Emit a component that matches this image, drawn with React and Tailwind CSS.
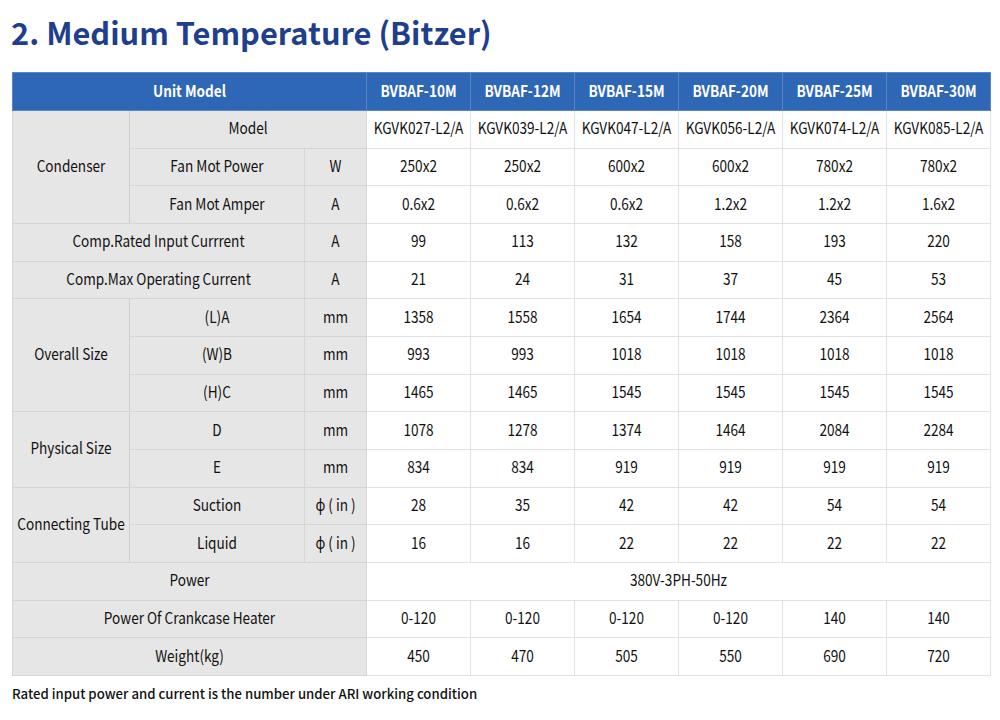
const models = ["BVBAF-10M", "BVBAF-12M", "BVBAF-15M", "BVBAF-20M", "BVBAF-25M", "BVBAF-30M"];

const rows = [
  { group: "Condenser", span: 3, label: "Model", unit: null, values: ["KGVK027-L2/A", "KGVK039-L2/A", "KGVK047-L2/A", "KGVK056-L2/A", "KGVK074-L2/A", "KGVK085-L2/A"] },
  { label: "Fan Mot Power", unit: "W", values: ["250x2", "250x2", "600x2", "600x2", "780x2", "780x2"] },
  { label: "Fan Mot Amper", unit: "A", values: ["0.6x2", "0.6x2", "0.6x2", "1.2x2", "1.2x2", "1.6x2"] },
  { wide: "Comp.Rated Input Currrent", unit: "A", values: ["99", "113", "132", "158", "193", "220"] },
  { wide: "Comp.Max Operating Current", unit: "A", values: ["21", "24", "31", "37", "45", "53"] },
  { group: "Overall Size", span: 3, label: "(L)A", unit: "mm", values: ["1358", "1558", "1654", "1744", "2364", "2564"] },
  { label: "(W)B", unit: "mm", values: ["993", "993", "1018", "1018", "1018", "1018"] },
  { label: "(H)C", unit: "mm", values: ["1465", "1465", "1545", "1545", "1545", "1545"] },
  { group: "Physical Size", span: 2, label: "D", unit: "mm", values: ["1078", "1278", "1374", "1464", "2084", "2284"] },
  { label: "E", unit: "mm", values: ["834", "834", "919", "919", "919", "919"] },
  { group: "Connecting Tube", span: 2, label: "Suction", unit: "ϕ ( in )", values: ["28", "35", "42", "42", "54", "54"] },
  { label: "Liquid", unit: "ϕ ( in )", values: ["16", "16", "22", "22", "22", "22"] },
  { full: "Power", merged: "380V-3PH-50Hz" },
  { full: "Power Of Crankcase Heater", values: ["0-120", "0-120", "0-120", "0-120", "140", "140"] },
  { full: "Weight(kg)", values: ["450", "470", "505", "550", "690", "720"] },
];

const lab = "bg-[#e7e6e6] border border-[#d6d6d6] text-center align-middle";
const val = "bg-white border border-[#e2e2e2] text-center align-middle";

// the reference type is narrow, so each cell text is squeezed a little
const T = ({ children }) => (
  <span className="block -mx-4 whitespace-nowrap scale-x-[0.85] -translate-y-[2px]">{children}</span>
);

export default function App() {
  return (
    <div className="w-[1000px] h-[720px] bg-white text-[#111] font-['Noto_Sans_CJK_SC','Noto_Sans',sans-serif]">
      <h1 className="pl-[11px] pt-[10px] h-[72px] text-[30.8px] font-bold leading-[44px] text-[#1f3f8c]">
        2. Medium Temperature (Bitzer)
      </h1>
      <table className="ml-[12px] w-[978px] table-fixed border-collapse text-[16px]">
        <colgroup>
          <col className="w-[117px]" />
          <col className="w-[175px]" />
          <col className="w-[62px]" />
          {models.map((m) => (
            <col key={m} className="w-[104px]" />
          ))}
        </colgroup>
        <thead>
          <tr className="h-[38px] bg-[#2f67b7] text-white text-[16px]">
            <th colSpan={3} className="border border-[#5a86c6] font-bold">
              <T>Unit Model</T>
            </th>
            {models.map((m) => (
              <th key={m} className="border border-[#5a86c6] font-bold">
                <T>{m}</T>
              </th>
            ))}
          </tr>
        </thead>
        <tbody>
          {rows.map((r, i) => (
            <tr key={i} className="h-[37.67px]">
              {r.group && (
                <td rowSpan={r.span} className={lab + " border-r-[#cfcfcf]"}>
                  <T>{r.group}</T>
                </td>
              )}
              {r.wide && (
                <td colSpan={2} className={lab}>
                  <T>{r.wide}</T>
                </td>
              )}
              {r.full && (
                <td colSpan={3} className={lab}>
                  <T>{r.full}</T>
                </td>
              )}
              {r.label && (
                <td colSpan={r.unit ? 1 : 2} className={lab}>
                  <T>{r.label}</T>
                </td>
              )}
              {r.unit && !r.full && (
                <td className={lab}>
                  <T>{r.unit}</T>
                </td>
              )}
              {r.merged ? (
                <td colSpan={6} className={val}>
                  <T>{r.merged}</T>
                </td>
              ) : (
                r.values.map((v, j) => (
                  <td key={j} className={val}>
                    <T>{v}</T>
                  </td>
                ))
              )}
            </tr>
          ))}
        </tbody>
      </table>
      <p className="pl-[12px] pt-[8px] text-[13.2px] font-medium">
        Rated input power and current is the number under ARI working condition
      </p>
    </div>
  );
}
